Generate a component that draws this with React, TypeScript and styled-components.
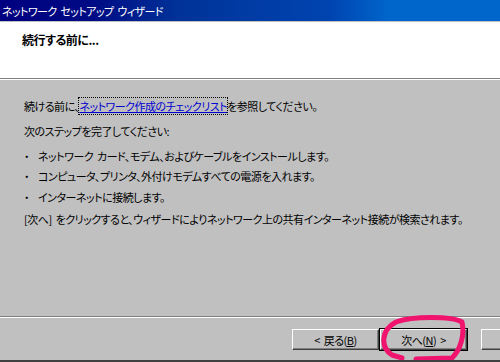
import React from "react";
import styled, { createGlobalStyle } from "styled-components";

const GlobalStyle = createGlobalStyle`
  html, body {
    margin: 0;
    padding: 0;
    background: #c0c0c0;
  }
  body {
    font-family: "Noto Sans CJK JP", "Noto Sans", sans-serif;
    font-size: 11px;
    letter-spacing: -0.5px;
    word-spacing: 2px;
    font-feature-settings: "palt";
  }
`;

const Window = styled.div`
  position: relative;
  width: 500px;
  height: 362px;
  display: flex;
  flex-direction: column;
  background: #c0c0c0;
  overflow: hidden;
  border-bottom: 2px solid #404040;
  box-sizing: border-box;
`;

const TitleBar = styled.div`
  height: 21px;
  display: flex;
  align-items: center;
  padding-left: 2px;
  color: #ffffff;
  font-size: 11px;
  letter-spacing: -0.6px;
  background: linear-gradient(
    to right,
    #000080 0px,
    #000a84 90px,
    #003399 180px,
    #0044b0 330px,
    #0066cc 390px,
    #0066cc 500px
  );
  border-bottom: 1px solid #c0c0c0;
`;

const Header = styled.div`
  height: 57px;
  background: #ffffff;
  padding: 10px 0 0 22px;
  box-sizing: border-box;
  border-bottom: 1px solid #808080;
`;

const HeaderTitle = styled.div`
  font-weight: bold;
  font-size: 12px;
  color: #000;
  line-height: 16px;
`;

const HeaderDivider = styled.div`
  height: 1px;
  background: #ffffff;
`;

const Body = styled.div`
  flex: 1;
  padding: 18px 0 0 24px;
  display: flex;
  flex-direction: column;
  color: #000;
  border-bottom: 1px solid #808080;
`;

const Line = styled.div<{ gap?: number }>`
  height: 16px;
  line-height: 16px;
  margin-bottom: ${(p) => p.gap ?? 9}px;
  white-space: pre;
  display: flex;
  align-items: center;
`;

const Bullet = styled.span`
  width: 14px;
  flex: none;
`;

const Link = styled.span`
  color: #0000d0;
  text-decoration: underline;
  outline: 1px dotted #000;
`;

const Footer = styled.div`
  height: 43px;
  border-top: 1px solid #ffffff;
  display: flex;
  align-items: flex-start;
  padding: 11px 0 0 292px;
  box-sizing: border-box;
`;

const Button = styled.div<{ primary?: boolean }>`
  width: 87px;
  height: 21px;
  box-sizing: border-box;
  display: flex;
  align-items: center;
  justify-content: center;
  white-space: pre;
  font-size: 11px;
  background: #c0c0c0;
  border-top: 1px solid #ffffff;
  border-left: 1px solid #ffffff;
  border-right: 1px solid #404040;
  border-bottom: 1px solid #404040;
  box-shadow: ${(p) =>
    p.primary ? "0 0 0 1px #000, inset -1px -1px 0 #808080" : "inset -1px -1px 0 #808080"};
  margin-right: ${(p) => (p.primary ? 14 : 1)}px;
  flex: none;
`;

const Key = styled.span`
  text-decoration: underline;
`;

const Annotation = styled.svg`
  position: absolute;
  left: 0;
  top: 0;
  pointer-events: none;
`;

export default function App() {
  return (
    <>
      <GlobalStyle />
      <Window>
        <TitleBar>ネットワーク セットアップ ウィザード</TitleBar>
        <Header>
          <HeaderTitle>続行する前に...</HeaderTitle>
        </Header>
        <HeaderDivider />
        <Body>
          <Line>
            続ける前に、<Link>ネットワーク作成のチェックリスト</Link>を参照してください。
          </Line>
          <Line>次のステップを完了してください:</Line>
          <Line gap={4}>
            <Bullet>・</Bullet>ネットワーク カード、モデム、およびケーブルをインストールします。
          </Line>
          <Line gap={5}>
            <Bullet>・</Bullet>コンピュータ、プリンタ、外付けモデムすべての電源を入れます。
          </Line>
          <Line gap={6}>
            <Bullet>・</Bullet>インターネットに接続します。
          </Line>
          <Line>
            [次へ] をクリックすると、ウィザードによりネットワーク上の共有インターネット接続が検索されます。
          </Line>
        </Body>
        <Footer>
          <Button>
            {"< 戻る("}
            <Key>B</Key>)
          </Button>
          <Button primary>
            次へ(<Key>N</Key>
            {") >"}
          </Button>
          <Button />
        </Footer>
        <Annotation width="500" height="362" viewBox="0 0 500 362">
          <path
            d="M452 358 C460 350 465 336 462 322 C452 316 412 316 396 322 C381 330 380 347 392 355 L402 358 M416 359 L452 358"
            fill="none"
            stroke="#f0146e"
            strokeWidth="5"
            strokeLinecap="round"
            strokeLinejoin="round"
          />
        </Annotation>
      </Window>
    </>
  );
}
